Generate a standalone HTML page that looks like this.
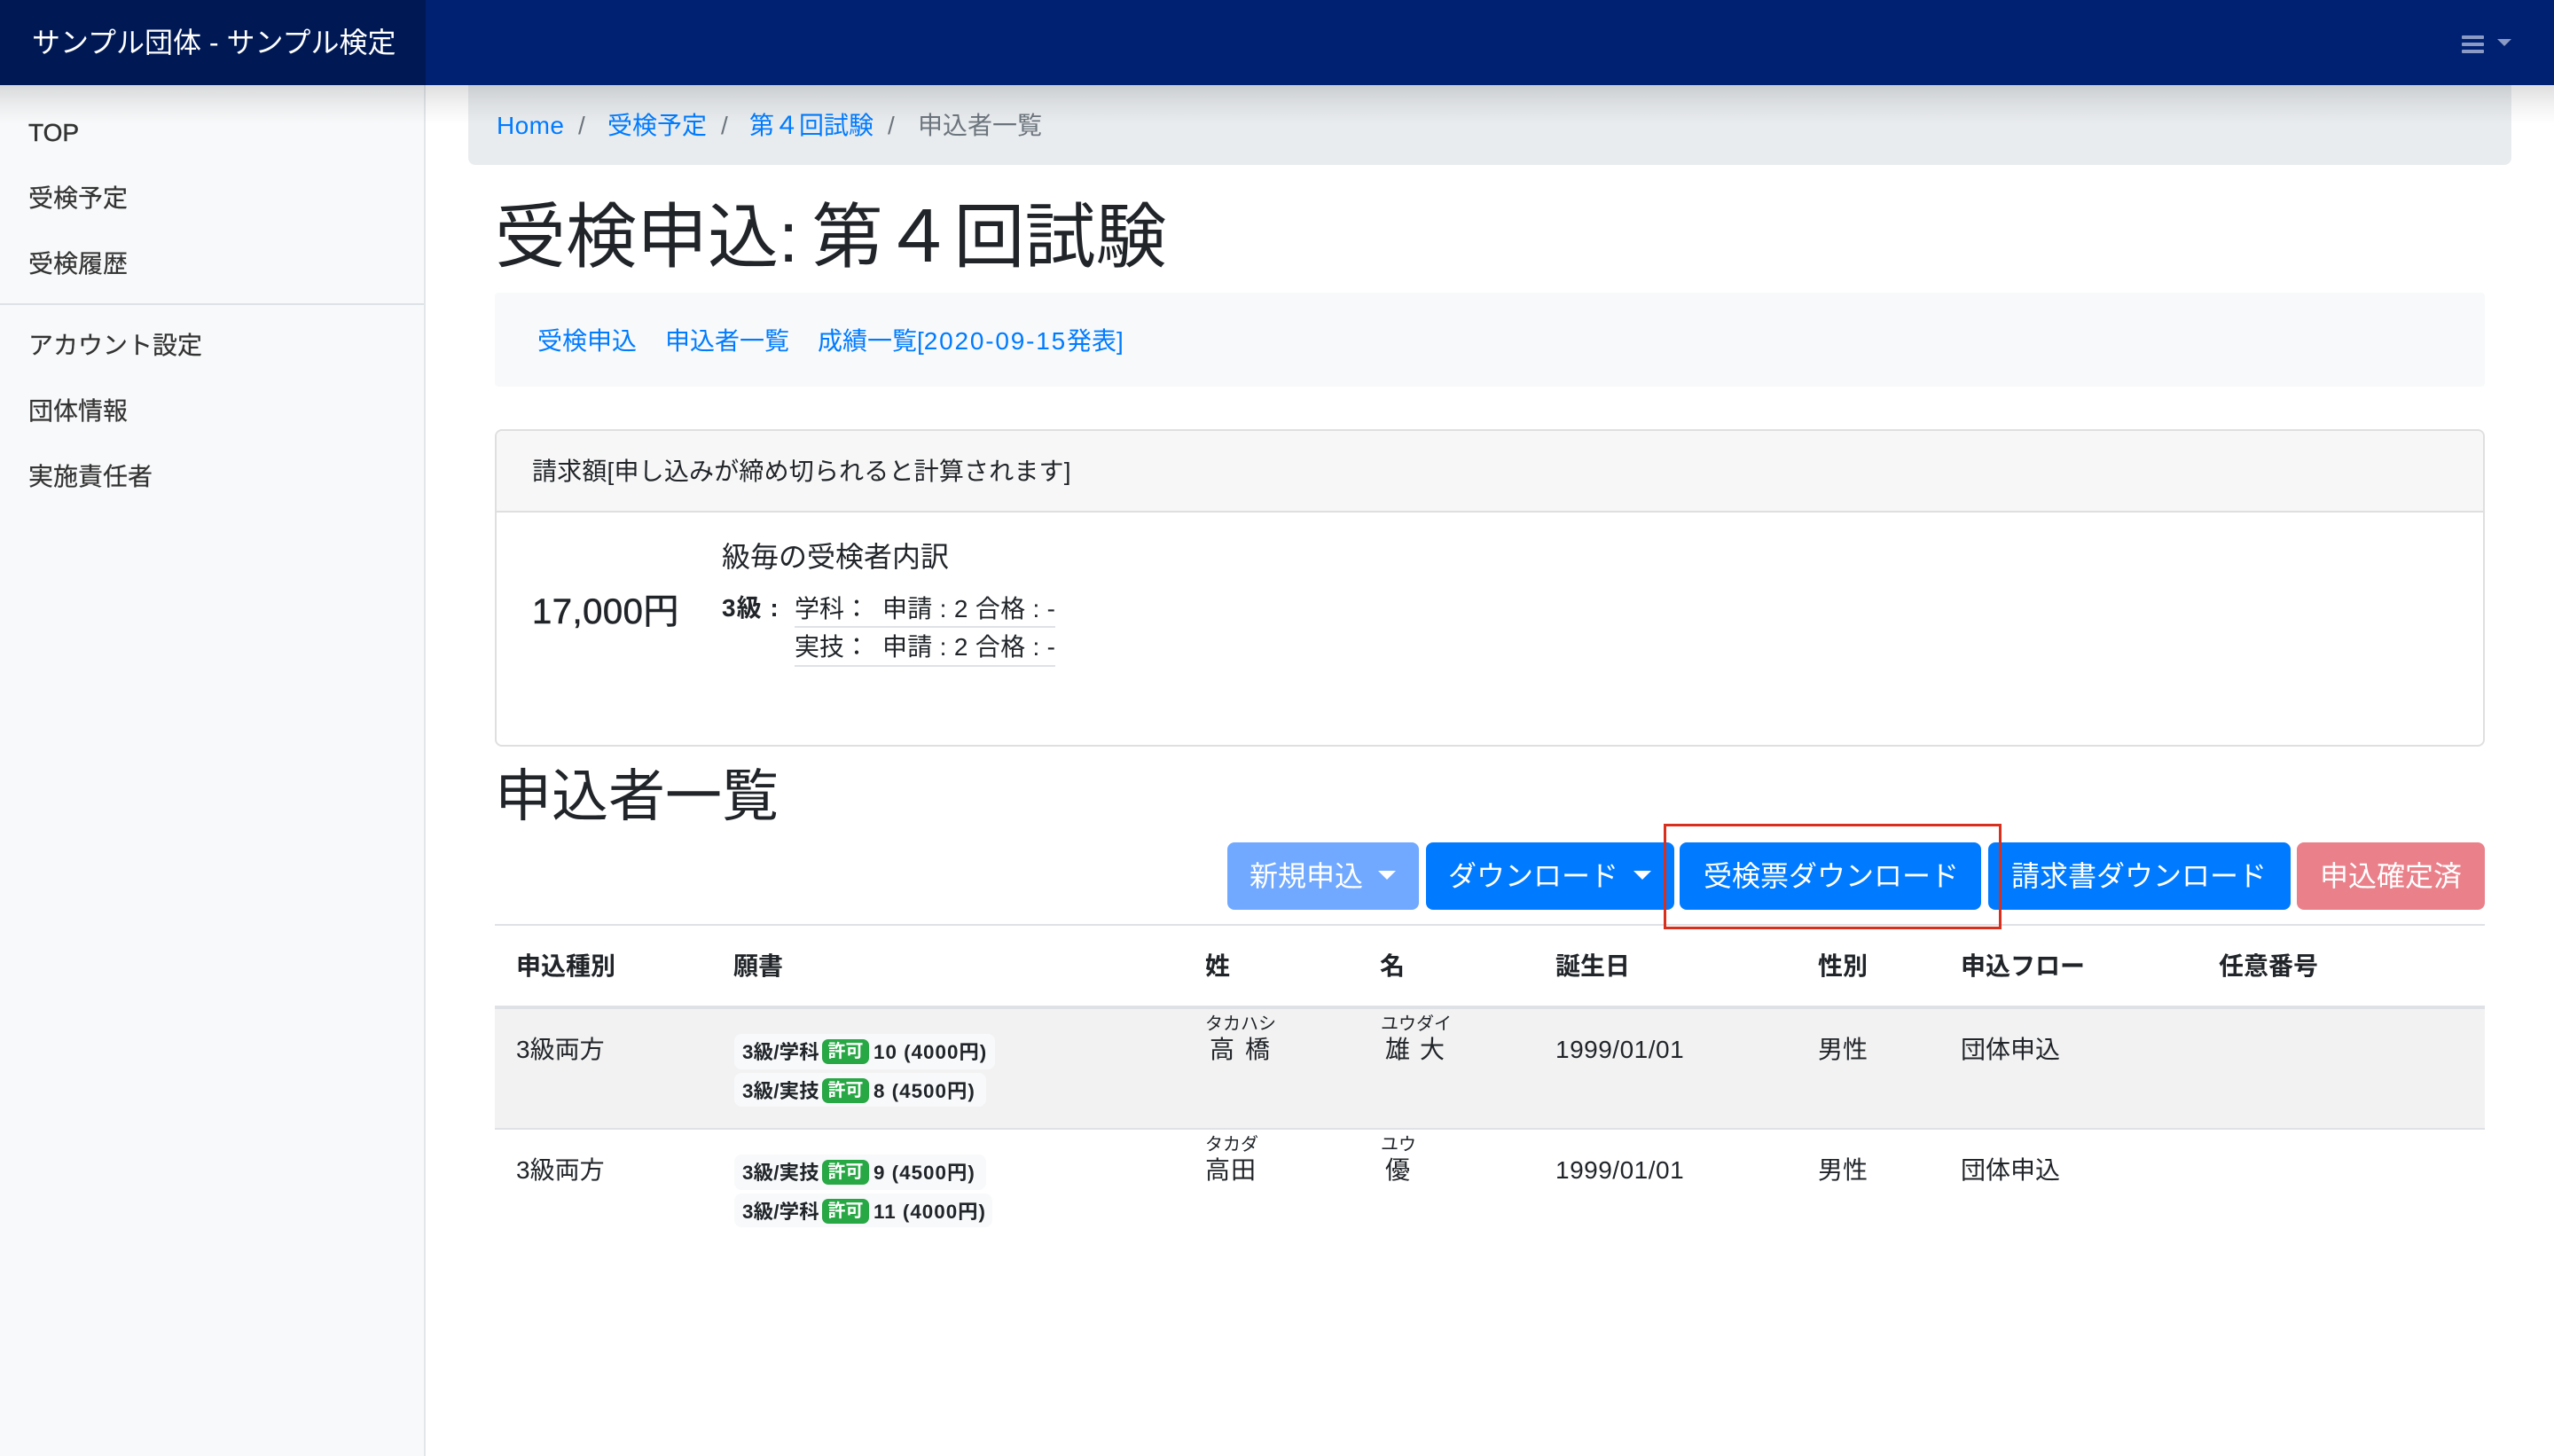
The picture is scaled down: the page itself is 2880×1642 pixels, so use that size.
<!DOCTYPE html>
<html lang="ja">
<head>
<meta charset="utf-8">
<title>受検申込</title>
<style>
html,body{margin:0;padding:0;background:#fff;}
body{position:relative;width:2880px;height:1642px;overflow:hidden;font-family:"Liberation Sans","Noto Sans CJK JP",sans-serif;font-size:28px;color:#212529;}
div,a,span.t{box-sizing:border-box;}
.b{position:absolute;}
.t{position:absolute;white-space:nowrap;height:40px;line-height:40px;margin-top:-20px;}
.l{color:#007bff;}
.g{color:#6c757d;}
.s{color:#333;-webkit-text-stroke:.2px #333;}
.h{font-weight:700;}
.w{color:#fff;font-size:32px;}
.btn{position:absolute;top:950px;height:76px;border-radius:8px;background:#007bff;}
.car{position:absolute;width:0;height:0;border-left:10px solid transparent;border-right:10px solid transparent;border-top:10px solid #fff;top:982px;}
.chip{position:absolute;background:#f8f9fa;border-radius:8px;left:828px;}
.bdg{position:absolute;left:927px;width:53px;height:28px;background:#28a745;border-radius:7px;color:#fff;font-weight:700;font-size:20px;line-height:28px;text-align:center;}
.c{font-size:22.4px;font-weight:700;letter-spacing:.2px;}
.n{letter-spacing:1px;}
.k{font-size:20px;}
</style>
</head>
<body>
<!-- navbar -->
<div class="b" style="left:0;top:0;width:2880px;height:96px;background:#002171;"></div>
<div class="b" style="left:0;top:0;width:480px;height:96px;background:#001955;"></div>
<span class="t" style="left:36px;top:48px;font-size:32px;color:#fff;">サンプル団体 - サンプル検定</span>
<div class="b" style="left:2776px;top:40px;width:25px;height:4px;background:#8a9ac4;border-radius:1px;"></div>
<div class="b" style="left:2776px;top:48px;width:25px;height:4px;background:#8a9ac4;border-radius:1px;"></div>
<div class="b" style="left:2776px;top:56px;width:25px;height:4px;background:#8a9ac4;border-radius:1px;"></div>
<div class="b" style="left:2816px;top:44px;width:0;height:0;border-left:8px solid transparent;border-right:8px solid transparent;border-top:8px solid #8a9ac4;"></div>

<!-- sidebar -->
<div class="b" style="left:0;top:96px;width:480px;height:1546px;background:#f8f9fa;border-right:2px solid #e3e6e9;"></div>
<span class="t s" style="left:32px;top:150px;font-weight:500;-webkit-text-stroke:.5px #333;">TOP</span>
<span class="t s" style="left:32px;top:224px;">受検予定</span>
<span class="t s" style="left:32px;top:298px;">受検履歴</span>
<div class="b" style="left:0;top:342px;width:478px;height:2px;background:#dee2e6;"></div>
<span class="t s" style="left:32px;top:390px;">アカウント設定</span>
<span class="t s" style="left:32px;top:464px;">団体情報</span>
<span class="t s" style="left:32px;top:538px;">実施責任者</span>

<!-- breadcrumb -->
<div class="b" style="left:528px;top:96px;width:2304px;height:90px;background:#e9ecef;border-radius:0 0 8px 8px;"></div>
<span class="t l" style="left:560px;top:142px;letter-spacing:.4px;">Home</span>
<span class="t g" style="left:652px;top:142px;">/</span>
<span class="t l" style="left:685px;top:142px;">受検予定</span>
<span class="t g" style="left:813px;top:142px;">/</span>
<span class="t l" style="left:845px;top:142px;">第４回試験</span>
<span class="t g" style="left:1001px;top:142px;">/</span>
<span class="t g" style="left:1035px;top:142px;">申込者一覧</span>

<!-- navbar shadow -->
<div class="b" style="left:0;top:96px;width:2880px;height:44px;background:linear-gradient(to bottom,rgba(0,0,0,.13),rgba(0,0,0,.05) 50%,rgba(0,0,0,0));"></div>

<!-- title -->
<span class="t" style="left:558px;top:268px;font-size:80px;height:100px;line-height:100px;margin-top:-50px;word-spacing:-7px;">受検申込: 第４回試験</span>

<!-- sub nav -->
<div class="b" style="left:558px;top:330px;width:2244px;height:106px;background:#f8f9fa;border-radius:4px;"></div>
<span class="t l" style="left:606px;top:385px;">受検申込</span>
<span class="t l" style="left:750px;top:385px;">申込者一覧</span>
<span class="t l" style="left:922px;top:385px;">成績一覧[<span style="letter-spacing:1.8px;">2020-09-15</span>発表]</span>

<!-- card -->
<div class="b" style="left:558px;top:484px;width:2244px;height:358px;border:2px solid #dfdfdf;border-radius:8px;background:#fff;overflow:hidden;">
  <div style="height:92px;background:#f7f7f7;border-bottom:2px solid #dfdfdf;"></div>
</div>
<span class="t" style="left:600px;top:532px;letter-spacing:.18px;">請求額[申し込みが締め切られると計算されます]</span>
<span class="t" style="left:600px;top:690px;font-size:40px;height:60px;line-height:60px;margin-top:-30px;letter-spacing:.5px;-webkit-text-stroke:.6px #212529;">17,000円</span>
<span class="t" style="left:814px;top:628px;font-size:32px;">級毎の受検者内訳</span>
<span class="t h" style="left:814px;top:686px;letter-spacing:1px;">3級 :</span>
<span class="t" style="left:896px;top:687px;">学科：</span>
<span class="t" style="left:995px;top:687px;letter-spacing:.3px;">申請 : 2 合格 : -</span>
<div class="b" style="left:896px;top:706px;width:294px;height:2px;background:#dee2e6;"></div>
<span class="t" style="left:896px;top:730px;">実技：</span>
<span class="t" style="left:995px;top:730px;letter-spacing:.3px;">申請 : 2 合格 : -</span>
<div class="b" style="left:896px;top:750px;width:294px;height:2px;background:#dee2e6;"></div>

<!-- h2 -->
<span class="t" style="left:558px;top:898px;font-size:64px;height:80px;line-height:80px;margin-top:-40px;">申込者一覧</span>

<!-- buttons -->
<div class="btn" style="left:1384px;width:216px;background:#70a9ff;"></div>
<span class="t w" style="left:1409px;top:988px;">新規申込</span>
<div class="car" style="left:1554px;"></div>
<div class="btn" style="left:1608px;width:280px;"></div>
<span class="t w" style="left:1633px;top:988px;">ダウンロード</span>
<div class="car" style="left:1842px;"></div>
<div class="btn" style="left:1894px;width:340px;"></div>
<span class="t w" style="left:1921px;top:988px;">受検票ダウンロード</span>
<div class="btn" style="left:2242px;width:341px;"></div>
<span class="t w" style="left:2268px;top:988px;">請求書ダウンロード</span>
<div class="btn" style="left:2590px;width:212px;background:#ea808a;"></div>
<span class="t w" style="left:2616px;top:988px;">申込確定済</span>

<!-- table -->
<div class="b" style="left:558px;top:1042px;width:2244px;height:2px;background:#dee2e6;"></div>
<div class="b" style="left:558px;top:1134px;width:2244px;height:4px;background:#dee2e6;"></div>
<div class="b" style="left:558px;top:1138px;width:2244px;height:134px;background:#f2f2f2;"></div>
<div class="b" style="left:558px;top:1272px;width:2244px;height:2px;background:#dee2e6;"></div>

<span class="t h" style="left:582px;top:1090px;">申込種別</span>
<span class="t h" style="left:827px;top:1090px;">願書</span>
<span class="t h" style="left:1359px;top:1090px;">姓</span>
<span class="t h" style="left:1556px;top:1090px;">名</span>
<span class="t h" style="left:1754px;top:1090px;">誕生日</span>
<span class="t h" style="left:2050px;top:1090px;">性別</span>
<span class="t h" style="left:2211px;top:1090px;">申込フロー</span>
<span class="t h" style="left:2502px;top:1090px;">任意番号</span>

<!-- row 1 -->
<span class="t" style="left:582px;top:1184px;">3級両方</span>
<div class="chip" style="top:1166px;width:294px;height:40px;"></div>
<span class="t c" style="left:837px;top:1187px;">3級/学科</span>
<div class="bdg" style="top:1172px;">許可</div>
<span class="t c n" style="left:985px;top:1187px;">10 (4000円)</span>
<div class="chip" style="top:1210px;width:284px;height:38px;"></div>
<span class="t c" style="left:837px;top:1231px;">3級/実技</span>
<div class="bdg" style="top:1216px;">許可</div>
<span class="t c n" style="left:985px;top:1231px;">8 (4500円)</span>
<span class="t k" style="left:1359px;top:1155px;">タカハシ</span>
<span class="t" style="left:1364px;top:1184px;">高</span>
<span class="t" style="left:1404px;top:1184px;">橋</span>
<span class="t k" style="left:1557px;top:1155px;">ユウダイ</span>
<span class="t" style="left:1562px;top:1184px;">雄</span>
<span class="t" style="left:1601px;top:1184px;">大</span>
<span class="t" style="left:1754px;top:1184px;letter-spacing:.5px;">1999/01/01</span>
<span class="t" style="left:2050px;top:1184px;">男性</span>
<span class="t" style="left:2211px;top:1184px;">団体申込</span>

<!-- row 2 -->
<span class="t" style="left:582px;top:1320px;">3級両方</span>
<div class="chip" style="top:1302px;width:284px;height:40px;"></div>
<span class="t c" style="left:837px;top:1323px;">3級/実技</span>
<div class="bdg" style="top:1308px;">許可</div>
<span class="t c n" style="left:985px;top:1323px;">9 (4500円)</span>
<div class="chip" style="top:1346px;width:291px;height:38px;"></div>
<span class="t c" style="left:837px;top:1367px;">3級/学科</span>
<div class="bdg" style="top:1352px;">許可</div>
<span class="t c n" style="left:985px;top:1367px;">11 (4000円)</span>
<span class="t k" style="left:1359px;top:1291px;">タカダ</span>
<span class="t" style="left:1359px;top:1320px;letter-spacing:1px;">高田</span>
<span class="t k" style="left:1557px;top:1291px;">ユウ</span>
<span class="t" style="left:1562px;top:1320px;">優</span>
<span class="t" style="left:1754px;top:1320px;letter-spacing:.5px;">1999/01/01</span>
<span class="t" style="left:2050px;top:1320px;">男性</span>
<span class="t" style="left:2211px;top:1320px;">団体申込</span>

<!-- annotation box -->
<div class="b" style="left:1876px;top:929px;width:381px;height:119px;border:3px solid #d8301c;"></div>
</body>
</html>
